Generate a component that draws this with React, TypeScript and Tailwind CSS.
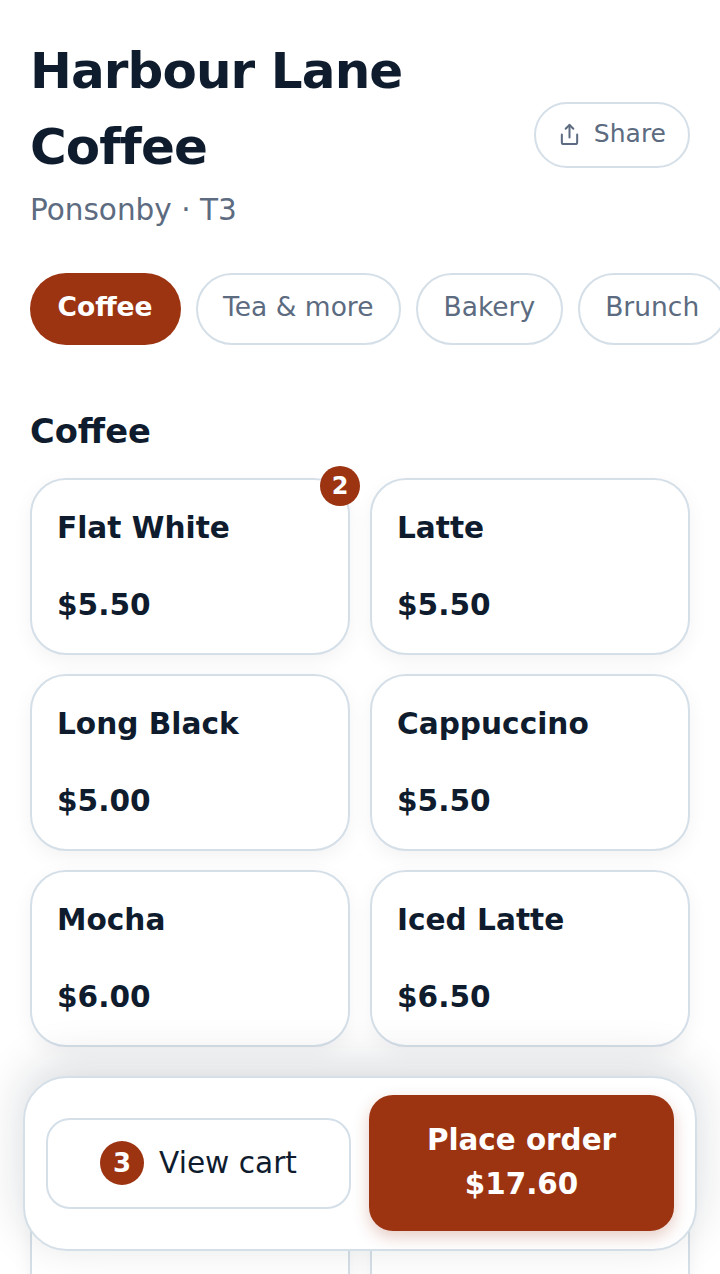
import { Share } from "lucide-react";

const tabs = ["Coffee", "Tea & more", "Bakery", "Brunch"];

const coffee = [
  { name: "Flat White", price: "$5.50", count: 2 },
  { name: "Latte", price: "$5.50" },
  { name: "Long Black", price: "$5.00" },
  { name: "Cappuccino", price: "$5.50" },
  { name: "Mocha", price: "$6.00" },
  { name: "Iced Latte", price: "$6.50" },
];

const tea = [
  { name: "Chai Latte", price: "$5.50" },
  { name: "Matcha", price: "$6.00" },
];

type Item = { name: string; price: string; count?: number };

const ItemCard = ({ item }: { item: Item }) => (
  <div className="relative h-[177px] rounded-[36px] border-2 border-[#d5dfe8] bg-white px-[25px] pt-[26px] shadow-[0_6px_20px_rgba(15,23,42,0.05)]">
    <div className="text-[29.6px] leading-[44px] font-bold text-[#0f1c2e]">{item.name}</div>
    <div className="mt-[33px] text-[29.6px] leading-[44px] font-bold text-[#0f1c2e]">{item.price}</div>
    {item.count && (
      <div className="absolute -top-[14px] -right-[12px] grid h-[40px] w-[40px] place-items-center rounded-full bg-[#9c3412] text-[24px] font-bold text-white">
        {item.count}
      </div>
    )}
  </div>
);

export default function App() {
  return (
    <div className="relative h-[1274px] w-[720px] overflow-hidden bg-white font-['DejaVu_Sans',sans-serif]">
      <div className="px-[30px] pt-[33px]">
        <div className="flex items-center justify-between">
          <div>
            <h1 className="w-[440px] text-[50px] leading-[76px] font-bold tracking-[-0.9px] text-[#0f1c2e]">Harbour Lane Coffee</h1>
            <p className="mt-[3px] text-[29.5px] leading-[44px] text-[#5c6b80]">Ponsonby · T3</p>
          </div>
          <button className="mt-[4px] flex h-[66px] items-center gap-[13px] rounded-full border-2 border-[#d5dfe8] bg-white px-[22px] text-[25px] text-[#5c6b80]">
            <Share size={23} strokeWidth={2.1} />
            <span className="pb-[2px]">Share</span>
          </button>
        </div>

        <div className="mt-[41px] flex w-[720px] gap-[15.5px]">
          {tabs.map((t, i) => (
            <div
              key={t}
              className={
                i === 0
                  ? "-mr-[0.5px] flex h-[72px] shrink-0 items-center rounded-full bg-[#9c3412] pr-[28.5px] pb-[4px] pl-[27.5px] text-[26.5px] font-bold text-white"
                  : "flex h-[72px] shrink-0 items-center rounded-full border-2 border-[#d5dfe8] bg-white pr-[25.5px] pb-[4px] pl-[25px] text-[26.5px] text-[#5c6b80]"
              }
            >
              {t}
            </div>
          ))}
        </div>

        <h2 className="mt-[63px] text-[33.7px] leading-[48px] font-bold text-[#0f1c2e]">Coffee</h2>
        <div className="mt-[22px] grid grid-cols-2 gap-x-[20px] gap-y-[19px]">
          {coffee.map((c) => (
            <ItemCard key={c.name} item={c} />
          ))}
        </div>

        <h2 className="mt-[42px] text-[33.7px] leading-[48px] font-bold text-[#0f1c2e]">Tea &amp; more</h2>
        <div className="mt-[23px] grid grid-cols-2 gap-x-[20px] gap-y-[19px]">
          {tea.map((c) => (
            <ItemCard key={c.name} item={c} />
          ))}
        </div>
      </div>

      <div className="absolute top-[1076px] left-[23px] flex h-[175px] w-[674px] items-center gap-[18px] rounded-[44px] border-2 border-[#d5dfe8] bg-white pr-[21px] pb-[1px] pl-[21px] shadow-[0_-12px_48px_rgba(15,23,42,0.16)]">
        <button className="flex h-[91px] w-[305px] shrink-0 items-center justify-center gap-[15px] rounded-[24px] border-2 border-[#d5dfe8] bg-white text-[29.6px] text-[#0f1c2e]">
          <span className="grid h-[44px] w-[44px] place-items-center rounded-full bg-[#9c3412] text-[26px] font-bold text-white">3</span>
          View cart
        </button>
        <button className="h-[136px] flex-1 rounded-[24px] bg-[#9c3412] pb-[2px] text-[29.4px] leading-[44px] font-bold text-white shadow-[0_6px_16px_rgba(156,52,18,0.25)]">
          Place order
          <br />
          $17.60
        </button>
      </div>
    </div>
  );
}
